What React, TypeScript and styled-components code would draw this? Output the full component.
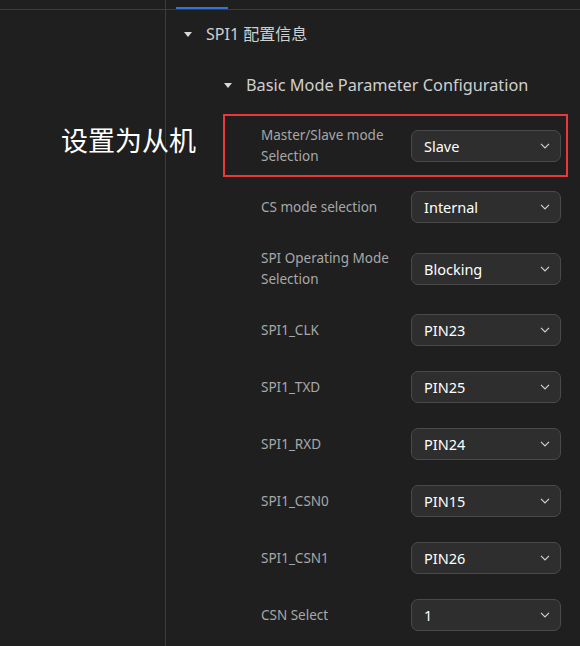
import React from "react";
import styled, { createGlobalStyle } from "styled-components";

const Global = createGlobalStyle`
  html, body { margin: 0; padding: 0; background: #1f1f1f; }
  body { font-family: "Noto Sans", "Noto Sans CJK SC", sans-serif; }
`;

const Shell = styled.div`
  position: relative;
  width: 580px;
  height: 646px;
  overflow: hidden;
  display: grid;
  grid-template-columns: 166px 1fr;
  grid-template-rows: 10px 1fr;
  background: #1f1f1f;
  color: #cccccc;
`;

const SideTop = styled.div`
  border-right: 1px solid #3c3c3c;
  border-bottom: 1px solid #3c3c3c;
`;

const TabStrip = styled.div`
  border-bottom: 1px solid #3c3c3c;
  padding-left: 10px;
  display: flex;
  align-items: flex-end;
`;

const TabIndicator = styled.div`
  width: 52px;
  height: 2px;
  background: #2f74d6;
`;

const Sidebar = styled.div`
  border-right: 1px solid #3c3c3c;
`;

const Main = styled.div`
  padding: 14px 0 0 18px;
  display: flex;
  flex-direction: column;
`;

const Heading = styled.div<{ $size: number; $indent: number; $top: number }>`
  display: flex;
  align-items: center;
  gap: 14px;
  margin-top: ${(p) => p.$top}px;
  padding-left: ${(p) => p.$indent}px;
  font-size: ${(p) => p.$size}px;
  color: #cfcfcf;
  line-height: 1.3;
`;

const Caret = styled.span`
  width: 0;
  height: 0;
  border-left: 4px solid transparent;
  border-right: 4px solid transparent;
  border-top: 5px solid #d8d8d8;
`;

const Rows = styled.div`
  display: flex;
  flex-direction: column;
  gap: 25px;
  padding: 29.5px 0 0 77px;
`;

const Row = styled.div<{ $marked?: boolean }>`
  position: relative;
  display: grid;
  grid-template-columns: 150px 150px;
  align-items: center;
  width: 300px;
  ${(p) =>
    p.$marked &&
    `&::before {
      content: "";
      position: absolute;
      left: -38px;
      right: -7px;
      top: -11px;
      bottom: -11px;
      border: 2px solid #e8383b;
      pointer-events: none;
    }`}
`;

const Label = styled.div`
  font-size: 13.5px;
  line-height: 20.5px;
  color: #a8a8a8;
  padding-right: 8px;
`;

const Select = styled.div`
  height: 32px;
  box-sizing: border-box;
  border: 1px solid #4a4a4a;
  border-radius: 7px;
  background: #2e2e2e;
  display: flex;
  align-items: center;
  justify-content: space-between;
  padding: 0 10px 0 12px;
  color: #ffffff;
  font-size: 14.5px;
  font-weight: 400;
`;

const Note = styled.div`
  position: absolute;
  left: 61px;
  top: 121px;
  font-family: "Noto Sans CJK SC", sans-serif;
  font-size: 27px;
  line-height: 38px;
  color: #ffffff;
`;

const Chevron = () => (
  <svg width="10" height="6" viewBox="0 0 10 6" fill="none">
    <path d="M1 0.8 L5 5 L9 0.8" stroke="#cfcfcf" strokeWidth="1.2" />
  </svg>
);

const rows: { label: string; value: string; marked?: boolean }[] = [
  { label: "Master/Slave mode Selection", value: "Slave", marked: true },
  { label: "CS mode selection", value: "Internal" },
  { label: "SPI Operating Mode Selection", value: "Blocking" },
  { label: "SPI1_CLK", value: "PIN23" },
  { label: "SPI1_TXD", value: "PIN25" },
  { label: "SPI1_RXD", value: "PIN24" },
  { label: "SPI1_CSN0", value: "PIN15" },
  { label: "SPI1_CSN1", value: "PIN26" },
  { label: "CSN Select", value: "1" },
];

export default function App() {
  return (
    <>
      <Global />
      <Shell>
        <SideTop />
        <TabStrip>
          <TabIndicator />
        </TabStrip>
        <Sidebar />
        <Main>
          <Heading $size={16} $indent={0} $top={0}>
            <Caret />
            <span>SPI1 配置信息</span>
          </Heading>
          <Heading $size={16.3} $indent={40} $top={30}>
            <Caret />
            <span>Basic Mode Parameter Configuration</span>
          </Heading>
          <Rows>
            {rows.map((r) => (
              <Row key={r.label} $marked={r.marked}>
                <Label>{r.label}</Label>
                <Select>
                  <span>{r.value}</span>
                  <Chevron />
                </Select>
              </Row>
            ))}
          </Rows>
        </Main>
        <Note>设置为从机</Note>
      </Shell>
    </>
  );
}
